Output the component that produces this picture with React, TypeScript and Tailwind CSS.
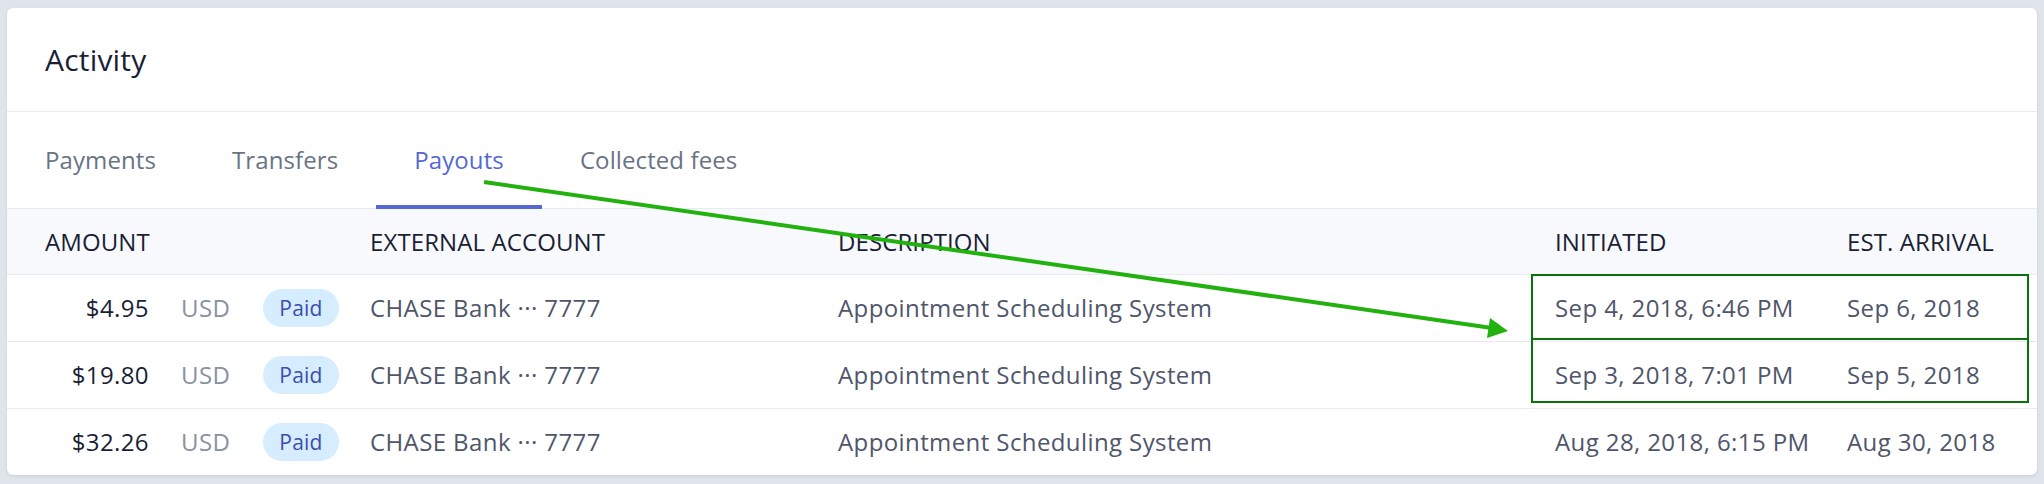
import React from 'react';

interface Payout {
    amount: string;
    initiated: string;
    arrival: string;
}

const payouts: Payout[] = [
    { amount: '$4.95', initiated: 'Sep 4, 2018, 6:46 PM', arrival: 'Sep 6, 2018' },
    { amount: '$19.80', initiated: 'Sep 3, 2018, 7:01 PM', arrival: 'Sep 5, 2018' },
    { amount: '$32.26', initiated: 'Aug 28, 2018, 6:15 PM', arrival: 'Aug 30, 2018' },
];

const tabs = ['Payments', 'Transfers', 'Payouts', 'Collected fees'];

const cols = 'grid grid-cols-[142px_114px_107px_468px_717px_292px_1fr] items-center';

export default function App() {
    return (
        <div className="relative w-[2044px] h-[484px] bg-[#e0e4eb] pt-[8px] px-[7px] font-['Open_Sans',sans-serif] tracking-[0.4px]">
            <div className="bg-white rounded-[6px] shadow-[0_1px_3px_rgba(50,50,93,0.12)] overflow-hidden">
                {/* Title */}
                <div className="h-[104px] flex items-center pl-[38px] border-b border-[#e6ebf1]">
                    <h2 className="text-[30px] font-medium text-[#1a1f36] tracking-[0.2px]">Activity</h2>
                </div>

                {/* Tabs */}
                <div className="h-[97px] flex border-b border-[#e6ebf1]">
                    {tabs.map(tab => (
                        <div
                            key={tab}
                            className={
                                tab === 'Payouts'
                                    ? 'relative flex items-center px-[38px] text-[24px] tracking-[0.1px] text-[#5469d4]'
                                    : 'relative flex items-center px-[38px] text-[24px] tracking-[0.1px] text-[#697386]'
                            }
                        >
                            {tab}
                            {tab === 'Payouts' && (
                                <span className="absolute left-0 right-0 -bottom-px h-[4px] bg-[#5469d4]" />
                            )}
                        </div>
                    ))}
                </div>

                {/* Table header */}
                <div className={`${cols} h-[66px] bg-[#f7f9fc] border-b border-[#e6ebf1] text-[24px] font-medium tracking-[0.1px] text-[#1a1f36]`}>
                    <div className="col-span-3 pl-[38px]">AMOUNT</div>
                    <div>EXTERNAL ACCOUNT</div>
                    <div>DESCRIPTION</div>
                    <div>INITIATED</div>
                    <div>EST. ARRIVAL</div>
                </div>

                {/* Rows */}
                {payouts.map((p, i) => (
                    <div
                        key={p.amount}
                        className={`${cols} ${i < payouts.length - 1 ? 'h-[67px] border-b border-[#e6ebf1]' : 'h-[66px]'} text-[24px] text-[#4f566b]`}
                    >
                        <div className="text-right font-medium text-[#1a1f36]">{p.amount}</div>
                        <div className="pl-[32px] text-[#8792a2]">USD</div>
                        <div>
                            <span className="inline-flex items-center justify-center w-[76px] h-[38px] rounded-full bg-[#d6ecff] text-[21px] font-medium text-[#3d4eac] tracking-[0.2px]">
                                Paid
                            </span>
                        </div>
                        <div>CHASE Bank ··· 7777</div>
                        <div>Appointment Scheduling System</div>
                        <div>{p.initiated}</div>
                        <div>{p.arrival}</div>
                    </div>
                ))}
            </div>

            {/* Annotation overlay */}
            <svg className="absolute inset-0 pointer-events-none" width="2044" height="484" viewBox="0 0 2044 484">
                <line x1="484" y1="182" x2="1492" y2="328" stroke="#22b10e" strokeWidth="4" />
                <polygon points="1508,331 1490,318 1487,338" fill="#22b10e" />
                <rect x="1532" y="275" width="496" height="64" fill="none" stroke="#0b710b" strokeWidth="2" />
                <rect x="1532" y="339" width="496" height="63" fill="none" stroke="#0b710b" strokeWidth="2" />
            </svg>
        </div>
    );
}
